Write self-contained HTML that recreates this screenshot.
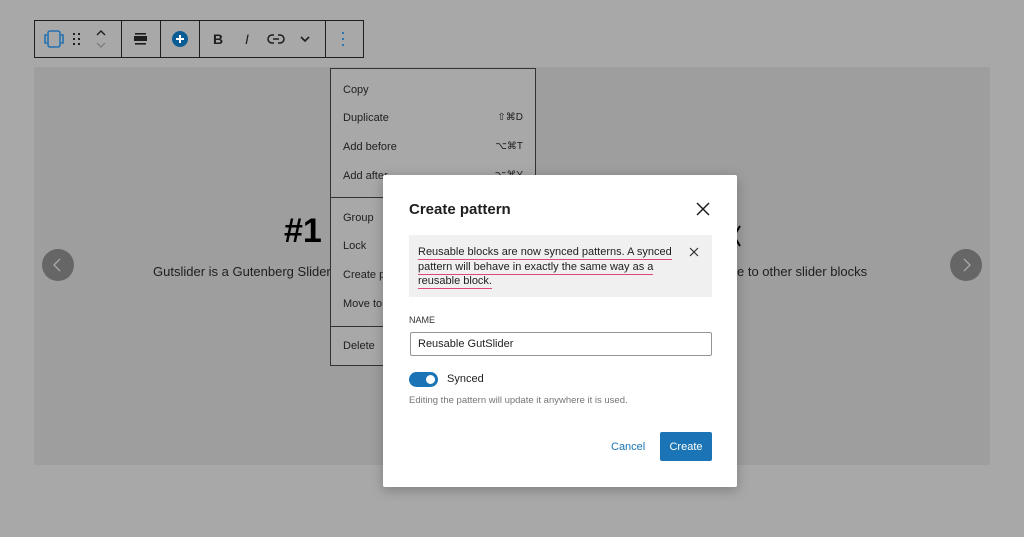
<!DOCTYPE html>
<html><head><meta charset="utf-8"><style>
*{box-sizing:border-box;margin:0;padding:0}
body{width:1024px;height:537px;background:#a8a8a8;font-family:"Liberation Sans",sans-serif;position:relative;overflow:hidden;color:#1e1e1e}
.abs{position:absolute}
.slider{left:34px;top:67px;width:956px;height:398px;background:#9e9e9e}
.tb{left:34px;top:20px;width:330px;height:38px;border:1px solid #1e1e1e;background:#a8a8a8}
.div{top:0;width:1px;height:36px;background:#1e1e1e}
.menu{left:330px;top:68px;width:206px;height:298px;border:1px solid #333;background:#a8a8a8;font-size:11px}
.mi{position:absolute;left:12px}
.sc{position:absolute;right:12px;font-size:10px}
.arrow{width:32px;height:32px;border-radius:50%;background:#666}
.dlg{left:383px;top:175px;width:354px;height:312px;background:#fff;border-radius:2px;box-shadow:0 3px 12px rgba(0,0,0,.25)}
u{text-decoration:none;border-bottom:1px solid #e0457b;padding-bottom:1px}
</style></head><body>
<div class="abs slider"></div>
<div class="abs tb">
 <div class="abs div" style="left:86px"></div>
 <div class="abs div" style="left:125px"></div>
 <div class="abs div" style="left:164px"></div>
 <div class="abs div" style="left:290px"></div>
 <svg class="abs" style="left:8px;top:7px" width="22" height="22" viewBox="0 0 22 22"><rect x="5" y="3" width="12" height="16" rx="2" fill="none" stroke="#2271b1" stroke-width="1.6"/><path d="M4 7H2v8h2M18 7h2v8h-2" fill="none" stroke="#2271b1" stroke-width="1.6"/></svg>
 <svg class="abs" style="left:38px;top:11px" width="8" height="14"><g fill="#1e1e1e"><rect x="0" y="1" width="2" height="2"/><rect x="5" y="1" width="2" height="2"/><rect x="0" y="6" width="2" height="2"/><rect x="5" y="6" width="2" height="2"/><rect x="0" y="11" width="2" height="2"/><rect x="5" y="11" width="2" height="2"/></g></svg>
 <svg class="abs" style="left:60px;top:7px" width="12" height="22"><path d="M2 7l4-4 4 4" fill="none" stroke="#1e1e1e" stroke-width="1.4"/><path d="M2 15l4 4 4-4" fill="none" stroke="#777" stroke-width="1.2"/></svg>
 <svg class="abs" style="left:98px;top:10px" width="16" height="16"><rect x="2" y="2" width="11" height="1.6" fill="#1e1e1e"/><rect x="1" y="5" width="13" height="5" fill="#1e1e1e"/><rect x="2" y="12" width="11" height="1.6" fill="#1e1e1e"/></svg>
 <svg class="abs" style="left:136px;top:9px" width="18" height="18"><circle cx="9" cy="9" r="8" fill="#0a5d94"/><path d="M9 5v8M5 9h8" stroke="#fff" stroke-width="2"/></svg>
 <div class="abs" style="left:178px;top:10px;font-weight:bold;font-size:14px">B</div>
 <div class="abs" style="left:210px;top:10px;font-style:italic;font-size:14px">I</div>
 <svg class="abs" style="left:232px;top:11px" width="18" height="14"><path d="M7 3H5a4 4 0 000 8h2M11 3h2a4 4 0 010 8h-2M6 7h6" fill="none" stroke="#1e1e1e" stroke-width="1.5"/></svg>
 <svg class="abs" style="left:264px;top:13px" width="12" height="10"><path d="M2 3l4 4 4-4" fill="none" stroke="#1e1e1e" stroke-width="1.6"/></svg>
 <svg class="abs" style="left:306px;top:10px" width="4" height="16"><g fill="#2271b1"><circle cx="2" cy="2" r="1.1"/><circle cx="2" cy="8" r="1.1"/><circle cx="2" cy="14" r="1.1"/></g></svg>
</div>
<div class="abs" style="left:284px;top:212px;font-size:34px;font-weight:bold;color:#000">#1</div>
<div class="abs" style="left:153px;top:264px;font-size:13px">Gutslider is a Gutenberg Slider</div>
<svg class="abs" style="left:734px;top:224px" width="8" height="24"><path d="M0 12L6 2M0 12l6 10" stroke="#000" stroke-width="2" fill="none"/></svg>
<div class="abs" style="left:737px;top:264px;font-size:13px">e to other slider blocks</div>
<div class="abs arrow" style="left:42px;top:249px"><svg width="32" height="32"><path d="M18 10l-6 6 6 6" fill="none" stroke="#aaa" stroke-width="1.3"/></svg></div>
<div class="abs arrow" style="left:950px;top:249px"><svg width="32" height="32"><path d="M14 10l6 6-6 6" fill="none" stroke="#aaa" stroke-width="1.3"/></svg></div>
<div class="abs menu">
 <div class="mi" style="top:15px">Copy</div>
 <div class="mi" style="top:43px">Duplicate</div><div class="sc" style="top:43px">⇧⌘D</div>
 <div class="mi" style="top:72px">Add before</div><div class="sc" style="top:72px">⌥⌘T</div>
 <div class="mi" style="top:101px">Add after</div><div class="sc" style="top:101px">⌥⌘Y</div>
 <div class="abs" style="left:0;top:128px;width:204px;height:1px;background:#333"></div>
 <div class="mi" style="top:143px">Group</div>
 <div class="mi" style="top:171px">Lock</div>
 <div class="mi" style="top:200px">Create pattern</div>
 <div class="mi" style="top:229px">Move to</div>
 <div class="abs" style="left:0;top:257px;width:204px;height:1px;background:#333"></div>
 <div class="mi" style="top:271px">Delete</div>
</div>
<div class="abs dlg">
 <div class="abs" style="left:26px;top:26px;font-size:15px;font-weight:bold">Create pattern</div>
 <svg class="abs" style="left:313px;top:27px" width="14" height="14"><path d="M1 1l12 12M13 1L1 13" stroke="#1e1e1e" stroke-width="1.5"/></svg>
 <div class="abs" style="left:26px;top:60px;width:303px;height:62px;background:#f0f0f0"></div>
 <div class="abs" style="left:35px;top:70px;width:265px;font-size:11px;line-height:14.7px"><u>Reusable blocks are now synced patterns. A synced</u> <u>pattern will behave in exactly the same way as a</u> <u>reusable block.</u></div>
 <svg class="abs" style="left:306px;top:72px" width="10" height="10"><path d="M1 1l8 8M9 1L1 9" stroke="#333" stroke-width="1.2"/></svg>
 <div class="abs" style="left:26px;top:140px;font-size:9px;color:#333">NAME</div>
 <div class="abs" style="left:27px;top:157px;width:302px;height:24px;border:1px solid #949494;border-radius:2px;font-size:11px;padding:5px 7px">Reusable GutSlider</div>
 <div class="abs" style="left:26px;top:197px;width:29px;height:15px;border-radius:8px;background:#1a74b5"></div>
 <div class="abs" style="left:43px;top:200px;width:9px;height:9px;border-radius:50%;background:#fff"></div>
 <div class="abs" style="left:64px;top:198px;font-size:11px">Synced</div>
 <div class="abs" style="left:26px;top:220px;font-size:9.5px;color:#757575">Editing the pattern will update it anywhere it is used.</div>
 <div class="abs" style="left:228px;top:266px;font-size:11px;color:#1a74b5">Cancel</div>
 <div class="abs" style="left:277px;top:257px;width:52px;height:29px;background:#1a74b5;color:#fff;font-size:11px;text-align:center;line-height:31px;border-radius:2px">Create</div>
</div>
</body></html>
